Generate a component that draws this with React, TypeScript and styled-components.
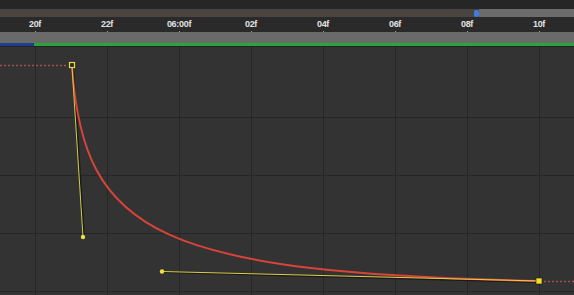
import styled, { createGlobalStyle } from 'styled-components';

const GlobalStyle = createGlobalStyle`
	html, body {
		margin: 0;
		padding: 0;
		background: #333333;
		overflow: hidden;
	}
	#root {
		width: 574px;
		height: 295px;
	}
`;

const labels = ['20f', '22f', '06:00f', '02f', '04f', '06f', '08f', '10f'];
const gridX = [35, 107, 179, 251, 323, 395, 467, 539];
const gridY = [70, 128, 186, 244];

const App = () => {
	return (
		<>
			<GlobalStyle />
			<Editor>
				<TopBar />
				<ScrollBand>
					<Played />
					<Handle />
					<Remaining />
				</ScrollBand>
				<Ruler>
					{labels.map((label, i) => (
						<Tick key={label} first={i === 0}>
							<span className='label'>{label}</span>
							<span className='mark' />
						</Tick>
					))}
				</Ruler>
				<RangeBar />
				<TrackLine>
					<Segment color='#1e3f8f' width={34} />
					<Segment color='#2aa53a' />
				</TrackLine>
				<Graph>
					<svg width='574' height='248' viewBox='0 0 574 248'>
						{gridX.map((x) => (
							<line key={'x' + x} x1={x + 0.5} y1={0} x2={x + 0.5} y2={248} stroke='#262626' strokeWidth={1} />
						))}
						{gridY.map((y) => (
							<line key={'y' + y} x1={0} y1={y + 0.5} x2={574} y2={y + 0.5} stroke='#262626' strokeWidth={1} />
						))}
						{/* dotted hold lines */}
						<line x1={0} y1={18.5} x2={68} y2={18.5} stroke='#a0524a' strokeWidth={1.3} strokeDasharray='2 2' />
						<line x1={544} y1={234.5} x2={574} y2={234.5} stroke='#a0524a' strokeWidth={1.3} strokeDasharray='2 2' />
						{/* handle shadows */}
						<line x1={73} y1={19} x2={84} y2={190} stroke='#1a1a1a' strokeWidth={2} />
						<line x1={162} y1={225} x2={539} y2={235} stroke='#1a1a1a' strokeWidth={2} />
						{/* curve */}
						<path d='M72 18.5 C 83 190, 162 225, 539 234' fill='none' stroke='#d8443a' strokeWidth={2} />
						{/* handles */}
						<line x1={72} y1={19} x2={83} y2={190} stroke='#d8cc48' strokeWidth={1} />
						<line x1={162} y1={224.5} x2={539} y2={234} stroke='#e0cf4a' strokeWidth={1} />
						<circle cx={83} cy={190} r={2.2} fill='#f0e040' />
						<circle cx={162} cy={224.5} r={2.2} fill='#f0e040' />
						{/* keys */}
						<rect x={69.5} y={15.5} width={5} height={5} fill='#2a2a2a' stroke='#e8d84a' strokeWidth={1.2} />
						<rect x={536} y={231} width={6} height={6} fill='#f4dc20' stroke='#1c1c1c' strokeWidth={0.6} />
					</svg>
				</Graph>
			</Editor>
		</>
	);
};
export default App;

const Editor = styled.div`
	display: flex;
	flex-direction: column;
	width: 574px;
	height: 295px;
	background: #333333;
	font-family: 'Liberation Sans', Arial, sans-serif;
`;

const TopBar = styled.div`
	height: 9px;
	background: #262626;
`;

const ScrollBand = styled.div`
	display: flex;
	align-items: center;
	height: 8px;
	background: #4a4540;
`;

const Played = styled.div`
	width: 474px;
	height: 8px;
	background: #4a4540;
`;

const Handle = styled.div`
	width: 5px;
	height: 7px;
	border-radius: 2px;
	background: #3d7ee0;
`;

const Remaining = styled.div`
	flex: 1;
	height: 8px;
	background: #6c6c6c;
`;

const Ruler = styled.div`
	display: flex;
	height: 15px;
	background: #2a2a2a;
`;

const Tick = styled.div<{ first: boolean }>`
	display: flex;
	flex-direction: column;
	align-items: center;
	width: 72px;
	flex-shrink: 0;
	margin-left: ${(props) => (props.first ? '-1px' : '0')};
	.label {
		margin-top: 3px;
		font-size: 9px;
		line-height: 9px;
		font-weight: bold;
		color: #e2e2e2;
		letter-spacing: -0.3px;
	}
	.mark {
		margin-top: 2px;
		width: 1px;
		height: 2px;
		background: #9a9a9a;
	}
`;

const RangeBar = styled.div`
	height: 11px;
	background: #6a6a6a;
`;

const TrackLine = styled.div`
	display: flex;
	height: 3px;
	border-bottom: 1px solid #222222;
`;

const Segment = styled.div<{ color: string; width?: number }>`
	height: 3px;
	background: ${(props) => props.color};
	width: ${(props) => (props.width ? props.width + 'px' : 'auto')};
	flex: ${(props) => (props.width ? '0 0 auto' : '1')};
`;

const Graph = styled.div`
	flex: 1;
	background: #333333;
	overflow: hidden;
	svg {
		display: block;
	}
`;
